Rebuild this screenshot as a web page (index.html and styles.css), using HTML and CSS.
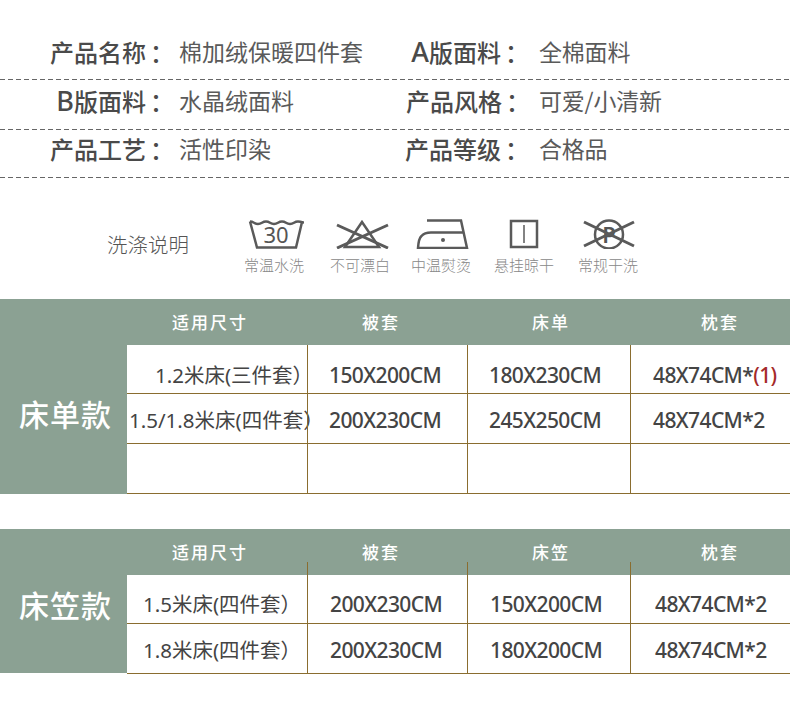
FILE: index.html
```html
<!DOCTYPE html>
<html lang="zh-CN">
<head>
<meta charset="utf-8">
<title>产品信息</title>
<link rel="stylesheet" href="styles.css">
</head>
<body>
<section class="specs">
  <div class="spec-row spec-row-1">
    <div class="spec-label">产品名称<span class="colon">：</span></div><div class="spec-value">棉加绒保暖四件套</div>
    <div class="spec-label spec-label-a"><span class="latin">A</span>版面料<span class="colon">：</span></div><div class="spec-value spec-value-right">全棉面料</div>
  </div>
  <div class="spec-row spec-row-2">
    <div class="spec-label"><span class="latin">B</span>版面料<span class="colon">：</span></div><div class="spec-value">水晶绒面料</div>
    <div class="spec-label spec-label-style">产品风格<span class="colon">：</span></div><div class="spec-value spec-value-right">可爱/小清新</div>
  </div>
  <div class="spec-row spec-row-3">
    <div class="spec-label">产品工艺<span class="colon">：</span></div><div class="spec-value">活性印染</div>
    <div class="spec-label spec-label-grade">产品等级<span class="colon">：</span></div><div class="spec-value spec-value-right">合格品</div>
  </div>
</section>

<section class="wash">
  <div class="wash-title">洗涤说明</div>
  <div class="wash-items">
    <figure class="wash-item">
      <svg class="wash-icon" viewBox="0 0 60 30"><path class="ic" d="M6 2.500c4 0 4 2.500 8 2.500s4-2.500 8-2.500 4 2.500 8 2.500 4-2.500 8-2.500 4 2.500 8 2.500 4-2.500 8-2.500 4 1 6 1"/><path class="ic" d="M6 2.500 13 28.500H52L58 3"/><text class="ic-text" x="32" y="24" text-anchor="middle">30</text></svg>
      <figcaption>常温水洗</figcaption>
    </figure>
    <figure class="wash-item">
      <svg class="wash-icon" viewBox="0 0 60 30"><path class="ic" d="M32 3 15 28H49Z"/><path class="ic-x" d="M7 6 58 29M7 29 58 6"/></svg>
      <figcaption>不可漂白</figcaption>
    </figure>
    <figure class="wash-item">
      <svg class="wash-icon" viewBox="0 0 60 30"><path class="ic" d="M16 1.500H50L56 29H7C7.500 22 8 19 10.500 17 13 14 15 13.500 20 13.500H53"/><circle class="ic-fill" cx="32" cy="21" r="2"/></svg>
      <figcaption>中温熨烫</figcaption>
    </figure>
    <figure class="wash-item">
      <svg class="wash-icon" viewBox="0 0 60 30"><rect class="ic" x="17" y="2" width="26" height="26"/><path class="ic-thin" d="M30 6V24"/></svg>
      <figcaption>悬挂晾干</figcaption>
    </figure>
    <figure class="wash-item">
      <svg class="wash-icon" viewBox="0 0 60 30"><circle class="ic" cx="31" cy="15.500" r="14"/><text class="ic-text ic-p" x="31" y="24" text-anchor="middle">P</text><path class="ic-x" d="M6 3 56 27M6 27 56 3"/></svg>
      <figcaption>常规干洗</figcaption>
    </figure>
  </div>
</section>

<section class="size-table size-table-a">
  <div class="side side-a">床单款</div>
  <div class="main">
    <div class="head">
      <div class="hc hc-1">适用尺寸</div><div class="hc hc-2">被套</div><div class="hc hc-3">床单</div><div class="hc hc-4">枕套</div>
    </div>
    <div class="row row-first">
      <div class="cell cell-1 pad-155">1.2米床(三件套）</div><div class="cell cell-2">150X200CM</div><div class="cell cell-3">180X230CM</div><div class="cell cell-4">48X74CM*<span class="red">(1)</span></div>
    </div>
    <div class="row row-next">
      <div class="cell cell-1 pad-129">1.5/1.8米床(四件套）</div><div class="cell cell-2">200X230CM</div><div class="cell cell-3">245X250CM</div><div class="cell cell-4">48X74CM*2</div>
    </div>
    <div class="row row-next">
      <div class="cell cell-1"></div><div class="cell cell-2"></div><div class="cell cell-3"></div><div class="cell cell-4"></div>
    </div>
  </div>
</section>

<section class="size-table size-table-b">
  <div class="side side-b">床笠款</div>
  <div class="main">
    <div class="head head-ticks">
      <div class="hc hc-1">适用尺寸</div><div class="hc hc-2">被套</div><div class="hc hc-3">床笠</div><div class="hc hc-4">枕套</div>
    </div>
    <div class="row row-second-first">
      <div class="cell cell-1 pad-143">1.5米床(四件套）</div><div class="cell cell-2 shift">200X230CM</div><div class="cell cell-3 shift">150X200CM</div><div class="cell cell-4 shift">48X74CM*2</div>
    </div>
    <div class="row row-second-next">
      <div class="cell cell-1 pad-143">1.8米床(四件套）</div><div class="cell cell-2 shift">200X230CM</div><div class="cell cell-3 shift">180X200CM</div><div class="cell cell-4 shift">48X74CM*2</div>
    </div>
  </div>
</section>
</body>
</html>
```
FILE: styles.css
```css
* { box-sizing: border-box; }
html, body { margin: 0; padding: 0; background: #fff; }
body {
  width: 790px;
  height: 718px;
  overflow: hidden;
  font-family: "Noto Sans", "Noto Sans CJK SC", sans-serif;
  color: #444;
}

/* spec list */
.spec-row {
  display: grid;
  grid-template-columns: 174px 191px 165px 1fr;
  align-items: end;
  background: repeating-linear-gradient(90deg, #666 0 5px, transparent 5px 8px) left bottom / 100% 1px no-repeat;
}
.spec-row-1 { height: 80px; padding-bottom: 13px; }
.spec-row-2 { height: 50px; padding-bottom: 14px; }
.spec-row-3 { height: 48px; padding-bottom: 14px; }
.spec-label {
  font-family: "Noto Sans CJK SC", sans-serif;
  font-size: 24px;
  font-weight: 500;
  line-height: 30px;
  text-align: right;
  color: #4a4a4a;
  white-space: nowrap;
}
.spec-label-a { padding-right: 1px; }
.spec-label-grade { padding-right: 1px; }
.latin { font-family: "Noto Sans", sans-serif; font-size: 27px; }
.colon { font-family: "Noto Sans CJK TC", sans-serif; margin-left: 4px; }
.spec-value {
  font-family: "Noto Sans CJK SC", sans-serif;
  font-size: 23px;
  font-weight: 400;
  line-height: 30px;
  padding: 0 0 1px 5px;
  color: #5a5a5a;
  white-space: nowrap;
}
.spec-value-right { padding-left: 9px; letter-spacing: -0.200px; }

/* wash care */
.wash {
  display: flex;
  padding: 41px 0 0 107px;
  height: 121px;
}
.wash-title {
  font-family: "Noto Sans CJK SC", sans-serif;
  font-size: 20.500px;
  font-weight: 300;
  line-height: 28px;
  width: 124.500px;
  padding-top: 11px;
  color: #555;
}
.wash-items {
  display: grid;
  grid-template-columns: 85px 87px 75px 91px 77px;
}
.wash-item { margin: 0; display: flex; flex-direction: column; align-items: center; }
.wash-icon { width: 60px; height: 30px; display: block; }
.wash-item figcaption {
  font-family: "Noto Sans CJK SC", sans-serif;
  font-size: 15px;
  font-weight: 300;
  line-height: 20px;
  margin-top: 6px;
  color: #888;
  white-space: nowrap;
}
.ic { fill: none; stroke: #5a5a5a; stroke-width: 2.500; }
.ic-x { fill: none; stroke: #5a5a5a; stroke-width: 3; }
.ic-thin { fill: none; stroke: #5a5a5a; stroke-width: 1.500; }
.ic-fill { fill: #5a5a5a; }
.ic-text { font-family: "Noto Sans", sans-serif; font-size: 22px; fill: #555; }
.ic-p { font-weight: 600; }

/* size tables */
.size-table {
  display: grid;
  grid-template-columns: 127px 1fr;
  background: #8ba193;
}
.size-table-a { height: 195px; margin-bottom: 35px; }
.size-table-b { height: 144px; }
.side {
  color: #fff;
  font-family: "Noto Sans CJK SC", sans-serif;
  font-size: 30px;
  font-weight: 500;
  letter-spacing: 1px;
  line-height: 40px;
  padding-left: 19px;
}
.side-a { padding-top: 94px; }
.side-b { padding-top: 55px; }
.main { display: flex; flex-direction: column; }
.head, .row { display: grid; grid-template-columns: 180px 160px 163px 1fr; }
.head { height: 46px; align-items: center; }
.hc {
  position: relative;
  height: 46px;
  color: #fff;
  font-family: "Noto Sans CJK SC", sans-serif;
  font-size: 17px;
  font-weight: 500;
  letter-spacing: 2px;
  line-height: 46px;
  white-space: nowrap;
}
.hc-1 { padding-left: 45px; }
.hc-2 { padding-left: 55px; }
.hc-3 { padding-left: 65px; }
.hc-4 { padding-left: 71px; }
.head-ticks .hc-2::before,
.head-ticks .hc-3::before,
.head-ticks .hc-4::before {
  content: "";
  position: absolute;
  left: 0;
  bottom: 0;
  width: 1px;
  height: 13px;
  background: #8a6d2f;
}
.row {
  background: #fff;
  border-bottom: 1px solid #8a6d2f;
}
.row-first { height: 49px; }
.row-next { height: 50px; }
.row-second-first { height: 49px; }
.row-second-next { height: 50px; }
.cell {
  font-size: 21px;
  font-weight: 500;
  letter-spacing: -0.600px;
  line-height: 28px;
  white-space: nowrap;
  padding-left: 21px;
  color: #444;
  border-left: 1px solid #8a6d2f;
}
.row-first .cell { padding-top: 16px; }
.row-next .cell { padding-top: 12px; }
.row-second-first .cell { padding-top: 15px; }
.row-second-next .cell { padding-top: 12px; }
.cell-1 { border-left: 0; font-weight: 400; font-size: 20.500px; letter-spacing: 0; }
.cell-4 { padding-left: 22px; }
.shift { padding-left: 22px; }
.cell-4.shift { padding-left: 24px; }
.pad-155 { padding-left: 28px; }
.pad-129 { padding-left: 2px; }
.pad-143 { padding-left: 16px; }
.red { color: #a52a2a; }
```
